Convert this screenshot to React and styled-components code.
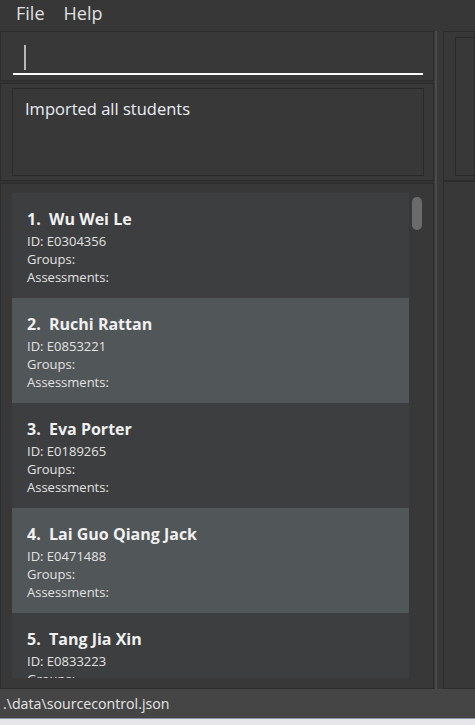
import React from "react";
import styled, { createGlobalStyle } from "styled-components";

const Global = createGlobalStyle`
  html, body { margin: 0; padding: 0; background: #383838; }
  body { font-family: "Open Sans", "Noto Sans", sans-serif; }
  * { box-sizing: border-box; }
`;

const Window = styled.div`
  width: 475px;
  height: 725px;
  display: flex;
  flex-direction: column;
  background: #383838;
  overflow: hidden;
`;

const MenuBar = styled.div`
  height: 31px;
  display: flex;
  align-items: flex-start;
  gap: 19px;
  padding: 0 0 0 16px;
  background: #373737;
`;

const MenuItem = styled.span`
  color: #e0e0e0;
  font-size: 18px;
  line-height: 27px;
  font-family: "Open Sans", sans-serif;
`;

const Main = styled.div`
  flex: 1;
  display: flex;
  min-height: 0;
`;

const LeftPane = styled.div`
  width: 434px;
  display: flex;
  flex-direction: column;
`;

const Splitter = styled.div`
  width: 9px;
  display: flex;
  padding-left: 1px;
  &::before {
    content: "";
    width: 2px;
    background: #4a4a4a;
  }
`;

const RightPane = styled.div`
  flex: 1;
  display: flex;
  flex-direction: column;
`;

const Panel = styled.div`
  border: 1px solid #2c2c2c;
  background: #383838;
`;

const CommandPanel = styled(Panel)`
  height: 50px;
  padding: 0 10px 5px 12px;
  display: flex;
  align-items: flex-end;
`;

const CommandField = styled.div`
  flex: 1;
  height: 34px;
  border-bottom: 2px solid #ffffff;
  display: flex;
  align-items: center;
  padding-left: 11px;
`;

const Caret = styled.span`
  width: 2px;
  height: 25px;
  background: #b8b8b8;
`;

const Gap = styled.div`
  height: ${(p) => p.h}px;
  background: #333333;
`;

const ResultPanel = styled(Panel)`
  height: 98px;
  padding: 4px 9px 4px 11px;
  display: flex;
`;

const ResultBox = styled.div`
  flex: 1;
  border: 1px solid #2a2a2a;
  padding: 8px 12px;
  color: #e8eef5;
  font-size: 16.5px;
  font-family: "Open Sans", sans-serif;
`;

const ListPanel = styled(Panel)`
  flex: 1;
  min-height: 0;
  padding: 9px 12px 10px 11px;
  display: flex;
  position: relative;
`;

const List = styled.div`
  width: 397px;
  overflow: hidden;
  display: flex;
  flex-direction: column;
  background: #3c3e3f;
`;

const Card = styled.div`
  flex: none;
  height: 105px;
  padding: 15px 15px 0 15px;
  background: ${(p) => (p.alt ? "#515658" : "#3c3e3f")};
  display: flex;
  flex-direction: column;
`;

const Name = styled.div`
  color: #f0f0f0;
  font-weight: 700;
  font-size: 16px;
  line-height: 22px;
  margin-bottom: 2px;
  white-space: pre;
`;

const Detail = styled.div`
  color: #e2e2e2;
  font-size: 13px;
  line-height: 18px;
`;

const ScrollThumb = styled.div`
  position: absolute;
  left: 411px;
  top: 13px;
  width: 10px;
  height: 33px;
  border-radius: 5px;
  background: #6b6b6b;
`;

const RightTop = styled(Panel)`
  height: 150px;
  padding: 5px 0 4px 11px;
  display: flex;
`;

const RightInner = styled.div`
  flex: 1;
  border: 1px solid #2a2a2a;
  border-right: none;
`;

const RightBottom = styled(Panel)`
  flex: 1;
  border-right: none;
`;

const StatusBar = styled.div`
  height: 30px;
  background: #454545;
  color: #e6e6e6;
  font-size: 14.2px;
  display: flex;
  align-items: center;
  padding-left: 3px;
  font-family: "Open Sans", sans-serif;
  border-bottom: 1px solid #8a93a6;
`;

const Bottom = styled.div`
  height: 6px;
  background: #e6e6ea;
`;

const students = [
  { name: "Wu Wei Le", id: "E0304356" },
  { name: "Ruchi Rattan", id: "E0853221" },
  { name: "Eva Porter", id: "E0189265" },
  { name: "Lai Guo Qiang Jack", id: "E0471488" },
  { name: "Tang Jia Xin", id: "E0833223" },
];

export default function App() {
  return (
    <Window>
      <Global />
      <MenuBar>
        <MenuItem>File</MenuItem>
        <MenuItem>Help</MenuItem>
      </MenuBar>
      <Main>
        <LeftPane>
          <CommandPanel>
            <CommandField>
              <Caret />
            </CommandField>
          </CommandPanel>
          <Gap h={2} />
          <ResultPanel>
            <ResultBox>Imported all students</ResultBox>
          </ResultPanel>
          <Gap h={2} />
          <ListPanel>
            <List>
              {students.map((s, i) => (
                <Card key={s.id} alt={i % 2 === 1}>
                  <Name>{`${i + 1}.  ${s.name}`}</Name>
                  <Detail>ID: {s.id}</Detail>
                  <Detail>Groups:</Detail>
                  <Detail>Assessments:</Detail>
                </Card>
              ))}
            </List>
            <ScrollThumb />
          </ListPanel>
        </LeftPane>
        <Splitter />
        <RightPane>
          <RightTop>
            <RightInner />
          </RightTop>
          <RightBottom />
        </RightPane>
      </Main>
      <StatusBar>.\data\sourcecontrol.json</StatusBar>
      <Bottom />
    </Window>
  );
}
